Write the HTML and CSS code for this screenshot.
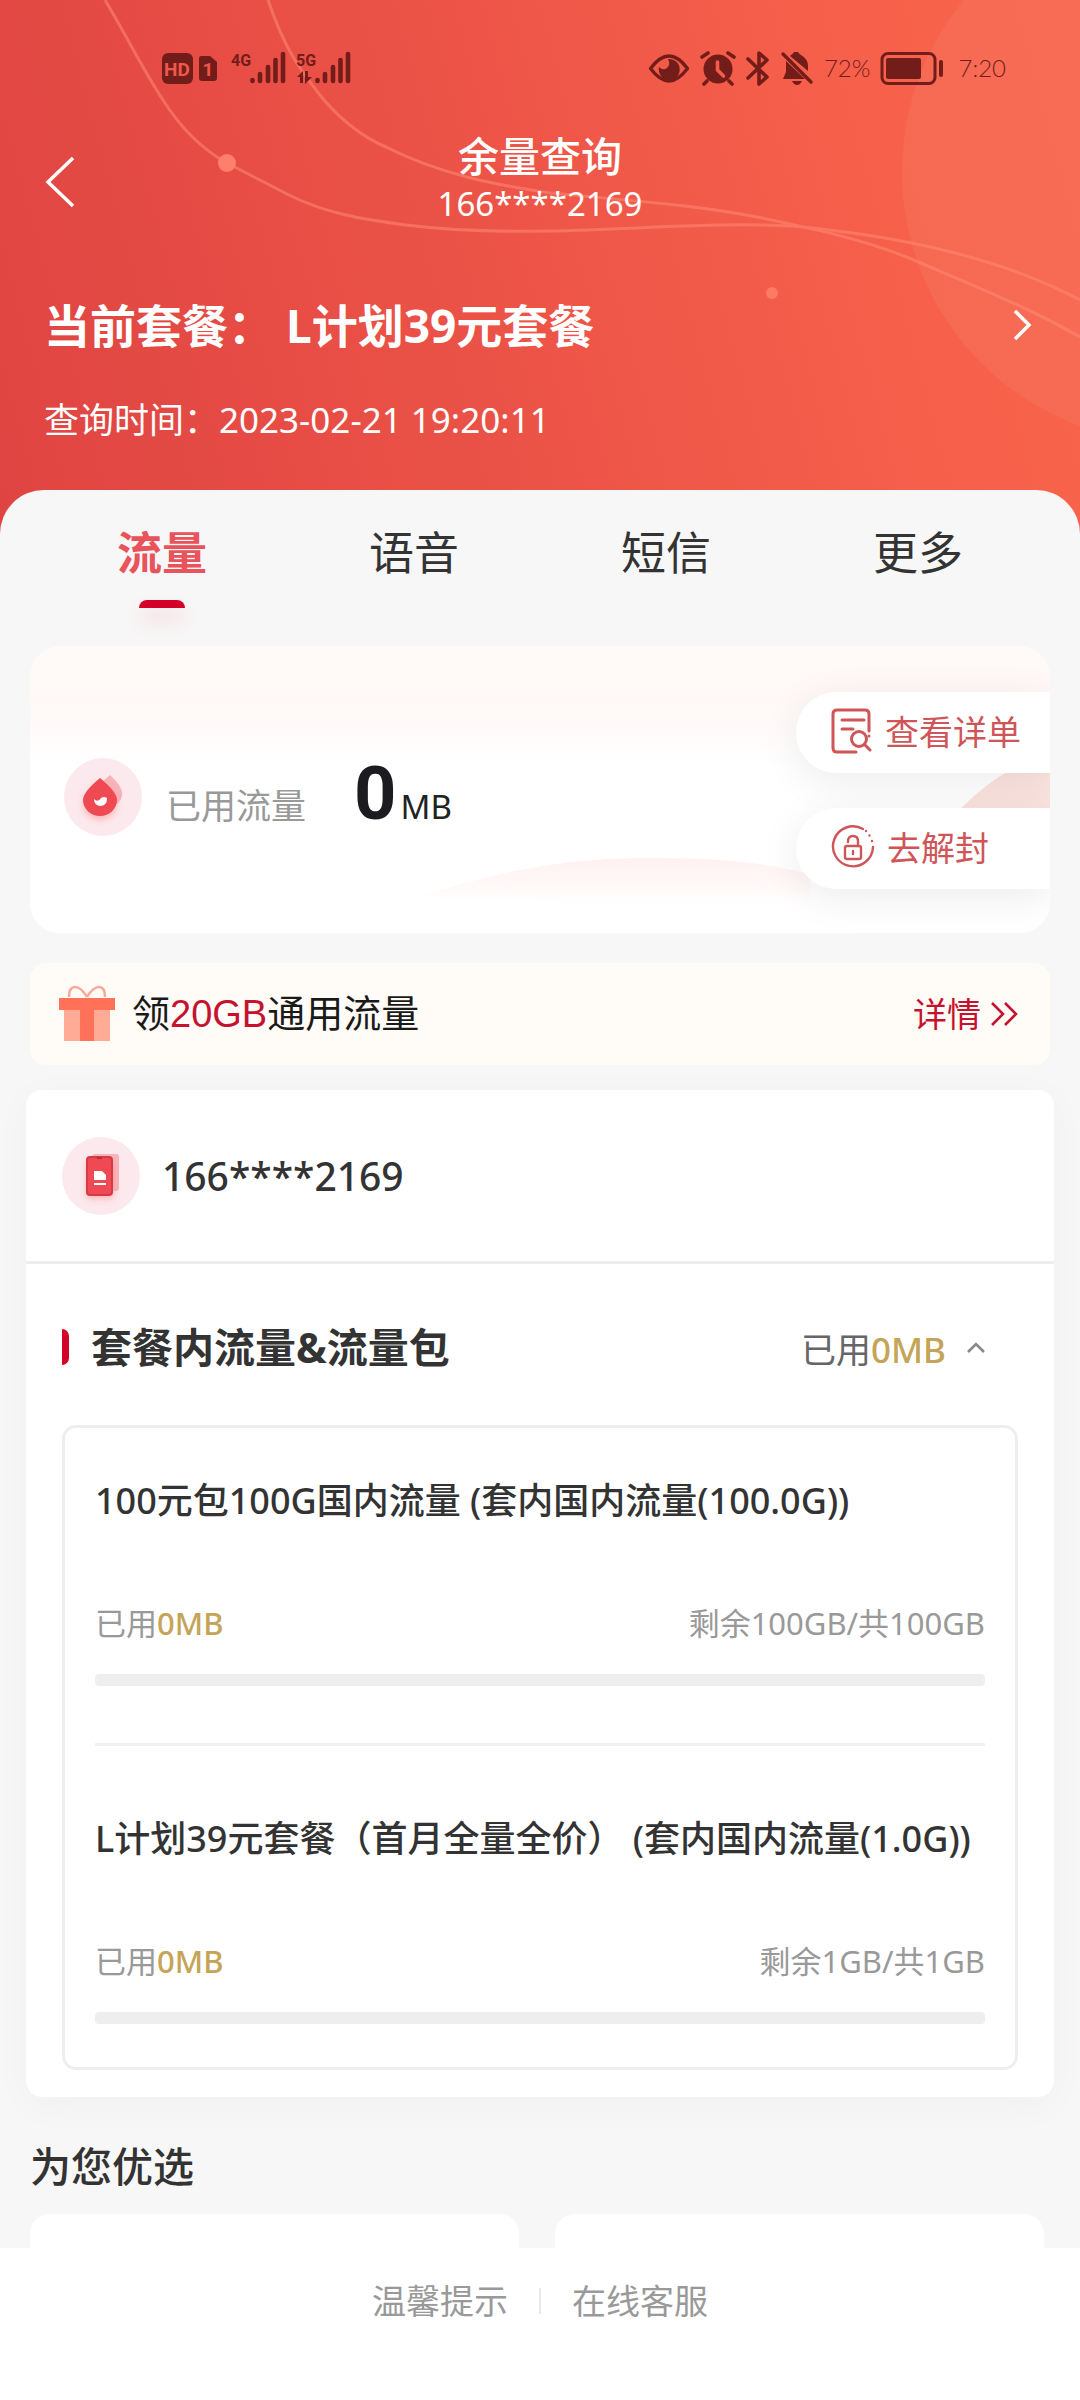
FILE: index.html
```html
<!DOCTYPE html>
<html lang="zh-CN">
<head>
<meta charset="utf-8">
<meta name="viewport" content="width=device-width, initial-scale=1">
<title>余量查询</title>
<link rel="stylesheet" href="styles.css">
</head>
<body>
<header class="hero">
  <svg class="hero-art" viewBox="0 0 1080 534" preserveAspectRatio="xMidYMin slice" aria-hidden="true">
    <circle cx="1172" cy="172" r="270" fill="#f58a70" opacity=".22"/>
    <g fill="none" stroke="#ff8a76" stroke-width="3" opacity=".55">
      <path d="M105 0C130 42 142 68 163 100C180 127 200 148 227 163C256 178 256 178 289 195C325 213 360 219 406 225C455 231 500 232 551 231C640 229 720 222 792 226C880 234 990 252 1080 300" />
      <path d="M268 0C285 50 300 70 324 100C345 124 365 138 386 147C440 174 490 184 551 193C620 200 690 204 757 217C800 226 860 238 909 258C970 284 1030 308 1080 337"/>
    </g>
    <circle cx="227" cy="163" r="9" fill="#fd7f6c"/>
    <circle cx="772" cy="293" r="6" fill="#fd7b64"/>
  </svg>

  <div class="status">
    <svg class="status-left" viewBox="0 0 192 38" role="img" aria-label="HD 1 4G 5G">
      <rect x="0" y="4" width="31" height="31" rx="6" fill="#731d1a"/>
      <text x="15" y="27" class="badge-text" text-anchor="middle">HD</text>
      <path d="M39 7h9l7 6v16q0 3-3 3H40q-3 0-3-3V10q0-3 2-3z" fill="#731d1a"/>
      <text x="46" y="27" class="badge-text" text-anchor="middle">1</text>
      <text x="69" y="17" class="net-text">4G</text>
      <text x="134" y="17" class="net-text">5G</text>
      <g stroke="#731d1a" stroke-width="4.6" stroke-linecap="round">
        <path d="M90.500 31v1M98 25v7M106 18v14M113.500 11v21M121 5v27M155.500 31v1M163 25v7M171 18v14M178.500 11v21M186 5v27"/>
      </g>
      <path d="M135 28l6-6v12h-3v-6zM143 22h3v6h4l-7 7z" fill="#731d1a"/>
    </svg>
    <div class="status-right">
      <svg width="42" height="38" viewBox="0 0 42 38" aria-hidden="true">
        <path d="M2.500 19.500Q12 7 21 7T39.500 19.500Q30 32 21 32T2.500 19.500z" fill="none" stroke="#731d1a" stroke-width="3.400" stroke-linejoin="round"/>
        <path d="M20 10A10.500 10.500 0 1 1 11 18Q15 22 19 19T20 10z" fill="#731d1a"/>
      </svg>
      <svg width="36" height="38" viewBox="0 0 36 38" aria-hidden="true">
        <circle cx="18" cy="20" r="14.500" fill="#731d1a"/>
        <path d="M2 8l6-4M34 8l-6-4M7 32l-3 3M29 32l3 3" stroke="#731d1a" stroke-width="3.600" stroke-linecap="round"/>
        <path d="M17.500 13v8l6 6" fill="none" stroke="#f25c4b" stroke-width="3.600" stroke-linecap="round"/>
      </svg>
      <svg width="24" height="38" viewBox="0 0 24 38" aria-hidden="true">
        <path d="M2 10l19 18-8 7V4l8 7L2 29" fill="none" stroke="#731d1a" stroke-width="3.600" stroke-linejoin="round" stroke-linecap="round"/>
      </svg>
      <svg width="34" height="38" viewBox="0 0 34 38" aria-hidden="true">
        <path d="M11 6q2-1 3-3h4q1 2 3 3 7 4 7 11v5L10 7zM6 12l19 18H3l3-7zM12 32h10q-2 4-5 4t-5-4z" fill="#731d1a"/>
        <path d="M3 5l28 28" stroke="#731d1a" stroke-width="3.400" stroke-linecap="round"/>
      </svg>
      <span class="status-text">72%</span>
      <svg width="64" height="38" viewBox="0 0 64 38" aria-hidden="true">
        <rect x="2" y="4.500" width="53" height="30" rx="6" fill="none" stroke="#731d1a" stroke-width="3"/>
        <rect x="6" y="9" width="35" height="21" rx="2" fill="#731d1a"/>
        <path d="M61 13v13" stroke="#731d1a" stroke-width="4" stroke-linecap="round"/>
      </svg>
      <span class="status-text clock">7:20</span>
    </div>
  </div>

  <nav class="titlebar">
    <button class="back" type="button" aria-label="返回">
      <svg width="32" height="54" viewBox="0 0 32 54"><path d="M29 3L4 27l25 24" fill="none" stroke="#fff" stroke-width="3.500"/></svg>
    </button>
    <div class="titles">
      <h1>余量查询</h1>
      <p>166****2169</p>
    </div>
  </nav>

  <a class="plan" href="#">
    <span>当前套餐： L计划39元套餐</span>
    <svg width="22" height="32" viewBox="0 0 22 32" aria-hidden="true"><path d="M3 2l14 14L3 30" fill="none" stroke="#fff" stroke-width="3.500"/></svg>
  </a>
  <p class="query-time">查询时间：2023-02-21 19:20:11</p>
</header>

<main class="panel">
  <div class="tabs" role="tablist">
    <button class="tab active" type="button" role="tab" aria-selected="true">流量</button>
    <button class="tab" type="button" role="tab">语音</button>
    <button class="tab" type="button" role="tab">短信</button>
    <button class="tab" type="button" role="tab">更多</button>
  </div>

  <section class="usage">
    <svg class="usage-art" viewBox="0 0 1020 286" preserveAspectRatio="none" aria-hidden="true">
      <defs><linearGradient id="wave" x1="0" y1="0" x2="0" y2="1"><stop offset="0" stop-color="#fff1f0"/><stop offset="1" stop-color="#fff1f0" stop-opacity="0"/></linearGradient></defs>
      <path d="M390 250Q500 212 610 211T780 228V258Z" fill="url(#wave)"/>
      <path d="M925 168Q970 120 1020 108V168Z" fill="#fbe3df"/>
    </svg>
    <svg class="round-icon usage-icon" width="78" height="78" viewBox="0 0 78 78" aria-hidden="true">
      <defs><filter id="glow" x="-50%" y="-50%" width="200%" height="200%"><feGaussianBlur stdDeviation="3"/></filter></defs>
      <circle cx="39" cy="39" r="39" fill="#fce9ed"/>
      <path d="M46 17Q60 30 58 38T48 48L38 24Z" fill="#f7b3b8"/>
      <path d="M36 24Q53 38 53 46A17 16 0 0 1 19 46Q19 38 36 24z" fill="#f88" opacity=".5" filter="url(#glow)"/>
      <path d="M36 20Q53 34 53 42A17 16 0 0 1 19 42Q19 34 36 20z" fill="#ef4a54"/>
      <path d="M30 41q4 4 7-1 3-2 6 0 0 8-7 8-6-1-6-7z" fill="#fff"/>
    </svg>
    <div class="usage-value"><span class="usage-label">已用流量</span><strong>0</strong><span class="unit">MB</span></div>
    <div class="usage-actions">
      <button type="button">
        <svg width="42" height="46" viewBox="0 0 42 46" fill="none" stroke="#cf5559" stroke-width="3" stroke-linecap="round" aria-hidden="true">
          <path d="M38 23V6q0-4-4-4H6Q2 2 2 6v34q0 4 4 4h19M11 12h22M11 21h11"/><circle cx="28" cy="31" r="7.500"/><path d="M34 37l5 5"/><path d="M38 28v.1"/>
        </svg>
        查看详单
      </button>
      <button type="button">
        <svg width="44" height="46" viewBox="0 0 44 46" fill="none" stroke="#cf5559" stroke-width="2.400" stroke-linecap="round" aria-hidden="true">
          <path d="M32 5A20 20 0 1 0 42 23"/><path d="M35 7v.1M38.500 11.500v.1M41 17v.1"/><rect x="14" y="22" width="16" height="13" rx="2"/><path d="M17 18v-1q0-5 5-5t5 5v5M22 27v3"/>
        </svg>
        去解封
      </button>
    </div>
  </section>

  <a class="promo" href="#">
    <svg width="58" height="58" viewBox="0 0 58 58" aria-hidden="true">
      <path d="M29 12Q23 2 17 2q-6 0-6 10M29 12Q35 2 41 2q6 0 6 10" fill="none" stroke="#f6ab97" stroke-width="2.500"/>
      <path d="M6 24h46v32H6z" fill="#ffab95"/><path d="M1 13h56v12H1zM22 25h14v31H22z" fill="#ff7259"/>
    </svg>
    <span class="promo-text">领<em>20GB</em>通用流量</span>
    <span class="promo-more">详情</span>
    <svg width="28" height="26" viewBox="0 0 28 26" aria-hidden="true"><path d="M2 2l11 11L2 24M15 2l11 11-11 11" fill="none" stroke="#c4122f" stroke-width="2.600"/></svg>
  </a>

  <section class="detail">
    <div class="account">
      <svg class="round-icon" width="78" height="78" viewBox="0 0 78 78" aria-hidden="true">
        <circle cx="39" cy="39" r="39" fill="#fce9ed"/>
        <rect x="30" y="17" width="27" height="37" rx="3" fill="#f8b5bb"/>
        <rect x="24" y="24" width="28" height="38" rx="4" fill="#f88" opacity=".5" filter="url(#glow)"/>
        <rect x="25" y="20" width="25" height="38" rx="3" fill="#ef4a54" stroke="#d63a48" stroke-width="2"/>
        <path d="M35 21h5" stroke="#b52f3e" stroke-width="2"/>
        <path d="M32 34h8l4 4v5H32zM32 46h12v2H32z" fill="#fff"/>
      </svg>
      <span>166****2169</span>
    </div>

    <div class="bundle">
      <div class="bundle-head">
        <h2>套餐内流量&amp;流量包</h2>
        <button class="toggle" type="button" aria-expanded="true">
          <span>已用<b>0MB</b></span>
          <svg width="20" height="14" viewBox="0 0 20 14" aria-hidden="true"><path d="M2 12l8-8 8 8" fill="none" stroke="#888" stroke-width="2.600"/></svg>
        </button>
      </div>
      <ul class="packs">
        <li>
          <h3>100元包100G国内流量 (套内国内流量(100.0G))</h3>
          <div class="amounts"><span>已用<b>0MB</b></span><span>剩余100GB/共100GB</span></div>
          <div class="bar" role="progressbar" aria-label="100元包" aria-valuenow="0"></div>
        </li>
        <li>
          <h3>L计划39元套餐（首月全量全价） (套内国内流量(1.0G))</h3>
          <div class="amounts"><span>已用<b>0MB</b></span><span>剩余1GB/共1GB</span></div>
          <div class="bar" role="progressbar" aria-label="L计划" aria-valuenow="0"></div>
        </li>
      </ul>
    </div>
  </section>

  <section class="picks">
    <h2>为您优选</h2>
    <div class="pick-grid"><div class="pick"></div><div class="pick"></div></div>
  </section>
</main>

<footer class="footer">
  <a href="#">温馨提示</a>
  <a href="#">在线客服</a>
</footer>
</body>
</html>
```
FILE: styles.css
```css
* { box-sizing: border-box; }
body {
  margin: 0;
  min-height: 100vh;
  display: flex;
  flex-direction: column;
  background: #f7f7f7;
  color: #333;
  font-family: "Noto Sans", "Noto Sans CJK SC", sans-serif;
  font-size: 34px;
}
h1, h2, h3, p, ul { margin: 0; padding: 0; }
ul { list-style: none; }
button { border: 0; padding: 0; background: none; color: inherit; font: inherit; }
a { color: inherit; text-decoration: none; }
svg { display: block; flex: none; }

/* Header */
.hero {
  position: relative;
  padding-bottom: 90px;
  color: #fff;
  background: linear-gradient(75deg, #df4442 0%, #ec5347 45%, #f7614b 82%, #f9654d 100%);
}
.hero-art { position: absolute; inset: 0; width: 100%; height: 100%; }
.status, .titlebar, .plan, .query-time { position: relative; }
.status {
  display: flex;
  justify-content: space-between;
  align-items: flex-start;
  padding: 49px 74px 45px 162px;
}
.status-left { width: 192px; height: 38px; }
.status-right { display: flex; align-items: center; gap: 10px; height: 38px; }
.status-text { color: #731d1a; font: 300 24px/38px Lato, sans-serif; }
.status-text.clock { margin-left: 4px; }
.badge-text { font: 700 19px Roboto, sans-serif; fill: #f0584a; }
.net-text { font: 700 16px Roboto, sans-serif; fill: #731d1a; }

.titlebar {
  display: grid;
  grid-template-columns: 100px 1fr 100px;
  align-items: center;
  padding: 0 44px;
}
.back { padding-top: 4px; }
.titles { text-align: center; }
.titles h1 { font-size: 41px; font-weight: 500; line-height: 48px; }
.titles p { font-size: 33px; line-height: 48px; }
.plan {
  display: flex;
  justify-content: space-between;
  align-items: center;
  margin-top: 67px;
  padding: 0 46px 0 44px;
  font-size: 46px;
  font-weight: 700;
  line-height: 60px;
}
.query-time { margin-top: 41px; padding: 0 44px; font-size: 35px; line-height: 48px; }

/* Rounded content sheet */
.panel {
  position: relative;
  flex: 1;
  display: flex;
  flex-direction: column;
  margin-top: -44px;
  border-radius: 44px 44px 0 0;
  background: #f7f7f7;
}
.tabs { display: grid; grid-template-columns: repeat(4, 1fr); padding: 29px 36px 0; }
.tab {
  display: flex;
  flex-direction: column;
  align-items: center;
  gap: 13px;
  font-size: 45px;
  line-height: 68px;
}
.tab::after { content: ""; width: 46px; height: 8px; }
.tab.active { color: #e8535c; font-weight: 700; }
.tab.active::after {
  border-radius: 8px 8px 0 0;
  background: #d3002a;
  box-shadow: 0 12px 18px rgba(255, 60, 90, .2);
}

.usage {
  position: relative;
  display: flex;
  align-items: center;
  margin: 38px 30px 0;
  padding: 46px 0 44px 34px;
  border-radius: 30px;
  overflow: hidden;
  background: linear-gradient(#fff9f7, #fff8f7 20%, #fff 42%);
}
.usage-art { position: absolute; inset: 0; width: 100%; height: 100%; }
.round-icon { position: relative; }
.usage-icon { margin-top: 12px; }
.usage-value {
  position: relative;
  flex: 1;
  display: flex;
  align-items: baseline;
  margin-top: 6px;
  padding-left: 24px;
}
.usage-label { font-size: 35px; color: #999; }
.usage-value strong {
  margin: 0 4px 0 48px;
  color: #1c1c20;
  font: 700 74px/90px Roboto, sans-serif;
}
.unit { color: #222; font-size: 33px; }
.usage-actions { position: relative; display: grid; gap: 35px; width: 254px; }
.usage-actions button {
  display: flex;
  align-items: center;
  gap: 12px;
  height: 81px;
  padding: 0 0 4px 35px;
  border-radius: 40px 0 0 40px;
  background: #fff;
  color: #cf5559;
  box-shadow: 0 8px 40px rgba(0, 0, 0, .08);
}

.promo {
  display: flex;
  align-items: center;
  margin: 30px 30px 0;
  padding: 22px 32px 22px 28px;
  border-radius: 16px;
  background: #fffbf7;
}
.promo-text {
  flex: 1;
  padding-left: 16px;
  color: #1a1a1a;
  font-family: "Liberation Sans", "Noto Sans CJK SC", sans-serif;
  font-size: 38px;
  line-height: 58px;
}
.promo-text em { color: #c4122f; font-style: normal; }
.promo-more { margin-right: 9px; color: #c4122f; line-height: 58px; }

.detail {
  margin: 25px 26px 0;
  border-radius: 16px;
  background: #fff;
  box-shadow: 0 8px 40px rgba(0, 0, 0, .03);
}
.account {
  display: flex;
  align-items: center;
  gap: 22px;
  padding: 47px 36px 46px;
  border-bottom: 3px solid #ededed;
  font-size: 39px;
  font-weight: 500;
  line-height: 78px;
}
.bundle { padding: 53px 36px 27px; }
.bundle-head { display: flex; justify-content: space-between; align-items: center; padding-right: 32px; }
.bundle-head h2 {
  display: flex;
  align-items: center;
  gap: 22px;
  font-size: 41px;
  font-weight: 700;
  line-height: 60px;
}
.bundle-head h2::before {
  content: "";
  width: 7px;
  height: 36px;
  border-radius: 0 7px 7px 0;
  background: #d3002a;
}
.toggle { display: flex; align-items: center; gap: 20px; color: #666; font-size: 35px; }
b { color: #c4a456; font-weight: 500; }

.packs { margin-top: 48px; padding: 0 30px; border: 3px solid #eee; border-radius: 14px; }
.packs li { padding: 47px 0 44px; }
.packs li:first-child { padding-bottom: 57px; border-bottom: 3px solid #f1f1f1; }
.packs li:last-child { padding-top: 67px; padding-bottom: 43px; }
.packs h3 { font-size: 36px; font-weight: 500; line-height: 52px; white-space: nowrap; }
.amounts {
  display: flex;
  justify-content: space-between;
  margin-top: 72px;
  color: #999;
  font-size: 31px;
  line-height: 48px;
}
.bar { height: 12px; margin-top: 27px; border-radius: 4px; background: #eee; }

.picks { flex: 1; display: flex; flex-direction: column; padding: 39px 36px 0 30px; }
.picks h2 { font-size: 41px; font-weight: 500; line-height: 60px; }
.pick-grid { flex: 1; display: grid; grid-template-columns: 1fr 1fr; gap: 36px; margin-top: 18px; }
.pick { min-height: 30px; border-radius: 20px 20px 0 0; background: #fff; }

.footer {
  display: flex;
  justify-content: center;
  padding: 29px 0 75px;
  background: #fff;
  color: #999;
  line-height: 48px;
}
.footer a { display: flex; align-items: center; }
.footer a + a::before {
  content: "";
  width: 2px;
  height: 26px;
  margin: 0 31px;
  background: #e8e8e8;
}
```
